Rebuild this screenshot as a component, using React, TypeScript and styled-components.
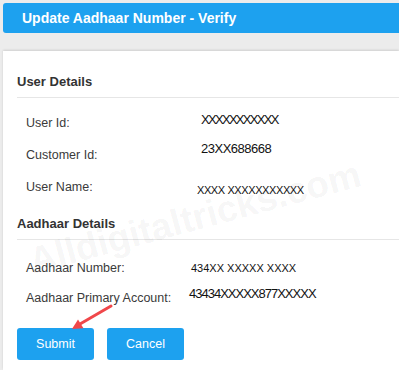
import React from "react";
import styled, { createGlobalStyle } from "styled-components";

interface DetailRow {
  label: string;
  value: string;
  size: number;
  tracking: number;
  indent: number;
  dy: number;
}

const userRows: DetailRow[] = [
  { label: "User Id:", value: "XXXXXXXXXXX", size: 13, tracking: -1.7, indent: 12, dy: -3 },
  { label: "Customer Id:", value: "23XX688668", size: 13, tracking: -0.5, indent: 12, dy: -6 },
  { label: "User Name:", value: "XXXX XXXXXXXXXXX", size: 11, tracking: -0.4, indent: 8, dy: 3 },
];

const aadhaarRows: DetailRow[] = [
  { label: "Aadhaar Number:", value: "434XX XXXXX XXXX", size: 11, tracking: 0, indent: 2, dy: 0 },
  { label: "Aadhaar Primary Account:", value: "43434XXXXX877XXXXX", size: 13, tracking: -1, indent: 0, dy: -4 },
];

const App: React.FC = () => {
  return (
    <>
      <GlobalStyle />
      <Page>
        <Header>Update Aadhaar Number - Verify</Header>
        <Card>
          <Watermark>Alldigitaltricks.com</Watermark>
          <SectionTitle>User Details</SectionTitle>
          <RowList $gap={16} $top={17}>
            {userRows.map((row) => (
              <Row key={row.label}>
                <Label>{row.label}</Label>
                <Value $size={row.size} $tracking={row.tracking} $indent={row.indent} $dy={row.dy}>
                  {row.value}
                </Value>
              </Row>
            ))}
          </RowList>
          <SectionTitle $spaced>Aadhaar Details</SectionTitle>
          <RowList $gap={14} $top={20}>
            {aadhaarRows.map((row) => (
              <Row key={row.label}>
                <Label>{row.label}</Label>
                <Value $size={row.size} $tracking={row.tracking} $indent={row.indent} $dy={row.dy}>
                  {row.value}
                </Value>
              </Row>
            ))}
          </RowList>
          <Actions>
            <Button type="button">Submit</Button>
            <Button type="button">Cancel</Button>
          </Actions>
        </Card>
        <Arrow width="60" height="40" viewBox="0 0 60 40">
          <line x1="51" y1="6" x2="20" y2="24" stroke="#f0474a" strokeWidth="3" strokeLinecap="round" />
          <polygon points="12,29 23.5,28.3 18,19.5" fill="#f0474a" />
        </Arrow>
      </Page>
    </>
  );
};

export default App;

const GlobalStyle = createGlobalStyle`
  body {
    margin: 0;
    background: #ffffff;
    font-family: "Liberation Sans", Arial, sans-serif;
  }
`;

const Page = styled.div`
  position: relative;
  background-color: #ececec;
  padding: 3px 0 0 3px;
  overflow: hidden;
`;

const Header = styled.div`
  height: 30px;
  line-height: 30px;
  padding-left: 19px;
  background-color: #1da1ef;
  border-radius: 3px 0 0 3px;
  color: #ffffff;
  font-size: 14px;
  font-weight: bold;
`;

const Card = styled.div`
  position: relative;
  margin-top: 18px;
  padding: 23px 0 10px 14px;
  background-color: #ffffff;
  box-shadow: 0 -1px 2px rgba(0, 0, 0, 0.12);
  overflow: hidden;
`;

const Watermark = styled.div`
  position: absolute;
  left: 192px;
  top: 167px;
  transform: translate(-50%, -50%) rotate(-15deg);
  font-size: 37px;
  font-weight: bold;
  color: rgba(0, 0, 0, 0.05);
  white-space: nowrap;
  pointer-events: none;
`;

const SectionTitle = styled.div<{ $spaced?: boolean }>`
  margin-top: ${(p) => (p.$spaced ? "21px" : "0")};
  padding-bottom: 7px;
  border-bottom: 1px solid #e6e6e6;
  font-size: 13px;
  line-height: 16px;
  font-weight: bold;
  color: #333333;
`;

const RowList = styled.div<{ $gap: number; $top: number }>`
  display: flex;
  flex-direction: column;
  gap: ${(p) => p.$gap}px;
  padding: ${(p) => p.$top}px 0 0 9px;
`;

const Row = styled.div`
  display: flex;
  align-items: flex-start;
  height: 16px;
`;

const Label = styled.div`
  width: 163px;
  flex-shrink: 0;
  font-size: 12.5px;
  line-height: 16px;
  color: #3a3a3a;
`;

const Value = styled.div<{ $size: number; $tracking: number; $indent: number; $dy: number }>`
  margin-left: ${(p) => p.$indent}px;
  margin-top: ${(p) => p.$dy}px;
  font-size: ${(p) => p.$size}px;
  letter-spacing: ${(p) => p.$tracking}px;
  line-height: 16px;
  color: #111111;
  white-space: nowrap;
`;

const Actions = styled.div`
  display: flex;
  gap: 13px;
  margin-top: 22px;
`;

const Button = styled.button`
  width: 77px;
  height: 32px;
  padding: 0;
  border: none;
  border-radius: 3px;
  background-color: #1da1ef;
  color: #ffffff;
  font-family: "Liberation Sans", Arial, sans-serif;
  font-size: 12.5px;
  cursor: pointer;
`;

const Arrow = styled.svg`
  position: absolute;
  left: 60px;
  top: 300px;
`;
